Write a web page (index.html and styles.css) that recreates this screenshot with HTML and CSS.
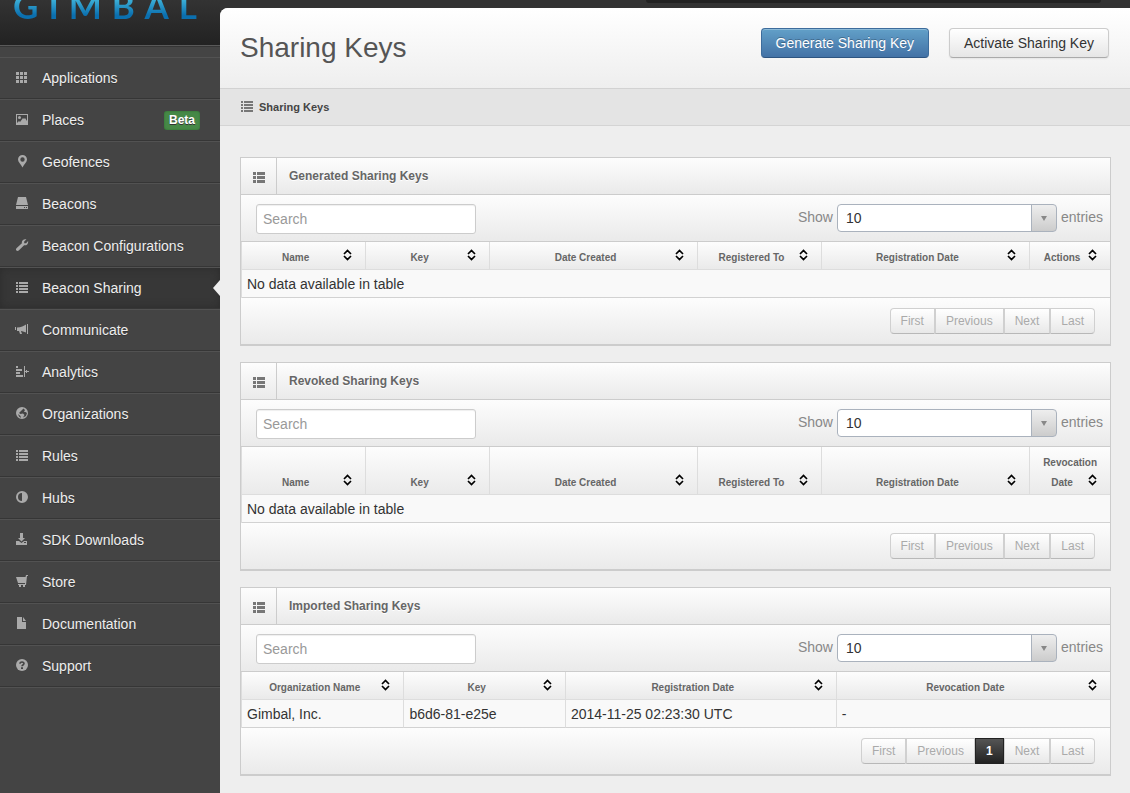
FILE: index.html
```html
<!DOCTYPE html>
<html lang="en">
<head>
<meta charset="utf-8">
<title>Sharing Keys</title>
<link rel="stylesheet" href="styles.css">
</head>
<body>
<svg class="sprite" aria-hidden="true">
  <symbol id="i-apps" viewBox="0 0 14 14"><path d="M1 1h3v3H1zM5 1h3v3H5zM9 1h3v3H9zM1 5h3v3H1zM5 5h3v3H5zM9 5h3v3H9zM1 9h3v3H1zM5 9h3v3H5zM9 9h3v3H9z"/></symbol>
  <symbol id="i-picture" viewBox="0 0 14 14"><path fill-rule="evenodd" d="M1 1h12v11H1zM2 2v8l2-2 1 1 3-4 1 1 1-1 2 3V2z"/><circle cx="4.5" cy="4.5" r="1.5"/></symbol>
  <symbol id="i-pin" viewBox="0 0 14 14"><path fill-rule="evenodd" d="M7.500 0a4.500 4.500 0 0 1 4.500 4.500C12 7 9 9.500 7.500 12.500 6 9.500 3 7 3 4.500A4.500 4.500 0 0 1 7.500 0zm0 2.300a2.200 2.200 0 1 0 0 4.400 2.200 2.200 0 0 0 0-4.400z"/></symbol>
  <symbol id="i-drive" viewBox="0 0 14 14"><path fill-rule="evenodd" d="M3 0h8l2 8H1zM1 9h12v3H1zM9 10v1h1v-1zM11 10v1h1v-1z"/></symbol>
  <symbol id="i-wrench" viewBox="0 0 14 14"><path d="M11.500.3 9.200 2.500v1.800h1.900l2-2.200c.5 2.600-1.500 4.600-4 4.100L4 11.300c-.8.900-2 .9-2.600.3-.7-.7-.6-1.800.3-2.600l5.200-4.700C6.300 1.700 8.500-.5 11.500.3z"/></symbol>
  <symbol id="i-list" viewBox="0 0 14 14"><path d="M1 1h2v2H1zM4 1h9v2H4zM1 4h2v2H1zM4 4h9v2H4zM1 7h2v2H1zM4 7h9v2H4zM1 10h2v2H1zM4 10h9v2H4z"/></symbol>
  <symbol id="i-horn" viewBox="0 0 14 14"><path d="M0 4h1v3H0zM12 1h1v10h-1zM11 1.500v8L6.500 8H6l1 3H5L4 8H2V4.500C6 4.500 9 3 11 1.500z"/></symbol>
  <symbol id="i-align" viewBox="0 0 14 14"><path d="M1 1h2v2H1zM1 4h6v2H1zM1 7h4v2H1zM1 10h7v2H1zM9 1h1v11H9zM11 5h1v1h2v1h-2v1h-1V7h-1V6h1z"/></symbol>
  <symbol id="i-globe" viewBox="0 0 14 14"><path fill-rule="evenodd" d="M7 0a6 6 0 1 1 0 12A6 6 0 0 1 7 0zM8.500 1.500 7 3 5.500 4.500 4 6l1.500 1L8 6.500 9.500 8 8 10.500l3-1.500 1-3-1.500-1L9 5l1-2zM3 7l1 2.500L6 11 5.500 9z"/></symbol>
  <symbol id="i-contrast" viewBox="0 0 14 14"><path fill-rule="evenodd" d="M7 0a6 6 0 1 1 0 12A6 6 0 0 1 7 0zm0 2a4 4 0 0 0 0 8z"/></symbol>
  <symbol id="i-download" viewBox="0 0 14 14"><path fill-rule="evenodd" d="M5 0h3v5h2L6.500 8.500 3 5h2zM1 8h3l2.500 2L9 8h3v4H1zM9 9v1h2V9z"/></symbol>
  <symbol id="i-cart" viewBox="0 0 14 14"><path d="M11 0h2v1h-1l-1 9H3V9h7V8H3L1 2h9.500zM4 10h2v2H4zM8 10h2v2H8z"/></symbol>
  <symbol id="i-file" viewBox="0 0 14 14"><path d="M2 0h5v5h4v7H2zM8 0l3 4H8z"/></symbol>
  <symbol id="i-help" viewBox="0 0 14 14"><circle cx="7" cy="6" r="6"/><path fill="none" stroke="#444" stroke-width="1.600" d="M5 4.700C5 2.300 9 2.500 9 4.600 9 6 7 6 7 7.300"/><path fill="#444" d="M6 8.300h2V10H6z"/></symbol>
  <symbol id="i-thlist" viewBox="0 0 14 14"><path d="M1 1h3v3H1zM5 1h8v3H5zM1 5h3v3H1zM5 5h8v3H5zM1 9h3v3H1zM5 9h8v3H5z"/></symbol>
  <symbol id="i-sort" viewBox="0 0 9 12"><path fill="none" stroke="#000" stroke-width="1.700" d="M1 5l3.500-3.500L8 5M1 7l3.500 3.500L8 7"/></symbol>
</svg>
<div class="app">
  <aside class="sidebar">
    <div class="brand"><span class="logo">GIMBAL</span></div>
    <nav class="nav">
      <a href="#"><svg class="icon"><use href="#i-apps"/></svg>Applications</a>
      <a href="#"><svg class="icon"><use href="#i-picture"/></svg>Places<span class="badge">Beta</span></a>
      <a href="#"><svg class="icon"><use href="#i-pin"/></svg>Geofences</a>
      <a href="#"><svg class="icon"><use href="#i-drive"/></svg>Beacons</a>
      <a href="#"><svg class="icon"><use href="#i-wrench"/></svg>Beacon Configurations</a>
      <a href="#" class="active" aria-current="page"><svg class="icon"><use href="#i-list"/></svg>Beacon Sharing</a>
      <a href="#"><svg class="icon"><use href="#i-horn"/></svg>Communicate</a>
      <a href="#"><svg class="icon"><use href="#i-align"/></svg>Analytics</a>
      <a href="#"><svg class="icon"><use href="#i-globe"/></svg>Organizations</a>
      <a href="#"><svg class="icon"><use href="#i-list"/></svg>Rules</a>
      <a href="#"><svg class="icon"><use href="#i-contrast"/></svg>Hubs</a>
      <a href="#"><svg class="icon"><use href="#i-download"/></svg>SDK Downloads</a>
      <a href="#"><svg class="icon"><use href="#i-cart"/></svg>Store</a>
      <a href="#"><svg class="icon"><use href="#i-file"/></svg>Documentation</a>
      <a href="#"><svg class="icon"><use href="#i-help"/></svg>Support</a>
    </nav>
  </aside>
  <div class="main">
    <div class="topbar"><div class="topmenu"></div></div>
    <main class="content">
      <header class="page-head">
        <h1>Sharing Keys</h1>
        <div class="actions">
          <button type="button" class="btn btn-primary">Generate Sharing Key</button>
          <button type="button" class="btn">Activate Sharing Key</button>
        </div>
      </header>
      <div class="breadcrumb"><svg class="icon"><use href="#i-list"/></svg><a href="#">Sharing Keys</a></div>
      <div class="panels">

        <section class="panel">
          <div class="panel-head"><span class="panel-icon"><svg class="icon"><use href="#i-thlist"/></svg></span><h2>Generated Sharing Keys</h2></div>
          <div class="toolbar">
            <input type="text" class="search" placeholder="Search" aria-label="Search generated sharing keys">
            <label class="length">Show <span class="select"><select><option>10</option><option>25</option><option>50</option></select></span> entries</label>
          </div>
          <table class="grid">
            <colgroup><col class="c-m"><col class="c-m"><col class="c-l"><col class="c-m"><col class="c-l"><col class="c-s"></colgroup>
            <thead><tr>
              <th><span class="sort">Name<svg><use href="#i-sort"/></svg></span></th>
              <th><span class="sort">Key<svg><use href="#i-sort"/></svg></span></th>
              <th><span class="sort">Date Created<svg><use href="#i-sort"/></svg></span></th>
              <th><span class="sort">Registered To<svg><use href="#i-sort"/></svg></span></th>
              <th><span class="sort">Registration Date<svg><use href="#i-sort"/></svg></span></th>
              <th><span class="sort">Actions<svg><use href="#i-sort"/></svg></span></th>
            </tr></thead>
            <tbody><tr><td colspan="6">No data available in table</td></tr></tbody>
          </table>
          <div class="panel-foot"><div class="pager">
            <button type="button">First</button><button type="button">Previous</button><button type="button">Next</button><button type="button">Last</button>
          </div></div>
        </section>

        <section class="panel">
          <div class="panel-head"><span class="panel-icon"><svg class="icon"><use href="#i-thlist"/></svg></span><h2>Revoked Sharing Keys</h2></div>
          <div class="toolbar">
            <input type="text" class="search" placeholder="Search" aria-label="Search revoked sharing keys">
            <label class="length">Show <span class="select"><select><option>10</option><option>25</option><option>50</option></select></span> entries</label>
          </div>
          <table class="grid">
            <colgroup><col class="c-m"><col class="c-m"><col class="c-l"><col class="c-m"><col class="c-l"><col class="c-s"></colgroup>
            <thead><tr>
              <th><span class="sort">Name<svg><use href="#i-sort"/></svg></span></th>
              <th><span class="sort">Key<svg><use href="#i-sort"/></svg></span></th>
              <th><span class="sort">Date Created<svg><use href="#i-sort"/></svg></span></th>
              <th><span class="sort">Registered To<svg><use href="#i-sort"/></svg></span></th>
              <th><span class="sort">Registration Date<svg><use href="#i-sort"/></svg></span></th>
              <th>Revocation <span class="sort">Date<svg><use href="#i-sort"/></svg></span></th>
            </tr></thead>
            <tbody><tr><td colspan="6">No data available in table</td></tr></tbody>
          </table>
          <div class="panel-foot"><div class="pager">
            <button type="button">First</button><button type="button">Previous</button><button type="button">Next</button><button type="button">Last</button>
          </div></div>
        </section>

        <section class="panel">
          <div class="panel-head"><span class="panel-icon"><svg class="icon"><use href="#i-thlist"/></svg></span><h2>Imported Sharing Keys</h2></div>
          <div class="toolbar">
            <input type="text" class="search" placeholder="Search" aria-label="Search imported sharing keys">
            <label class="length">Show <span class="select"><select><option>10</option><option>25</option><option>50</option></select></span> entries</label>
          </div>
          <table class="grid">
            <colgroup><col class="i-m"><col class="i-m"><col class="i-l"><col class="i-r"></colgroup>
            <thead><tr>
              <th><span class="sort">Organization Name<svg><use href="#i-sort"/></svg></span></th>
              <th><span class="sort">Key<svg><use href="#i-sort"/></svg></span></th>
              <th><span class="sort">Registration Date<svg><use href="#i-sort"/></svg></span></th>
              <th><span class="sort">Revocation Date<svg><use href="#i-sort"/></svg></span></th>
            </tr></thead>
            <tbody><tr><td>Gimbal, Inc.</td><td>b6d6-81-e25e</td><td>2014-11-25 02:23:30 UTC</td><td>-</td></tr></tbody>
          </table>
          <div class="panel-foot"><div class="pager">
            <button type="button">First</button><button type="button">Previous</button><button type="button" class="current">1</button><button type="button">Next</button><button type="button">Last</button>
          </div></div>
        </section>

      </div>
    </main>
  </div>
</div>
</body>
</html>
```
FILE: styles.css
```css
* { box-sizing: border-box; }

body {
  margin: 0;
  background: #333;
  color: #333;
  font: 14px/20px "Liberation Sans", Arial, sans-serif;
}

a { color: inherit; text-decoration: none; }
.sprite { display: none; }
.icon { width: 14px; height: 14px; flex: none; fill: currentColor; }

.app { display: flex; min-height: 100vh; }

/* Sidebar */
.sidebar { width: 220px; flex: none; background: #444; }

.brand {
  display: flex;
  align-items: flex-end;
  height: 46px;
  padding: 0 0 23px 13px;
  background: linear-gradient(#333, #222);
  border-bottom: 1px solid #595959;
  overflow: hidden;
}

.logo {
  color: transparent;
  background: linear-gradient(#4cc4e4 20%, #0b6fae 80%);
  background-clip: text;
  -webkit-background-clip: text;
  font: bold 35px/34px Lato, sans-serif;
  letter-spacing: 10px;
}

.nav {
  padding-top: 10px;
  border-top: 1px solid #353535;
  border-bottom: 1px solid #525252;
}

.nav a {
  position: relative;
  display: flex;
  align-items: center;
  height: 42px;
  padding: 0 20px 0 15px;
  border-top: 1px solid #525252;
  border-bottom: 1px solid #363636;
  color: #eee;
  text-shadow: 0 1px 0 #333;
}

.nav .icon { margin-right: 13px; color: #aaa; }

.nav .active {
  background: #373737;
  box-shadow: inset 0 0 8px #2c2c2c;
}

.nav .active::after {
  content: "";
  position: absolute;
  right: 0;
  top: 12px;
  border: 8px solid transparent;
  border-left-width: 0;
  border-right: 7px solid #eee;
}

.badge {
  margin-left: auto;
  padding: 0 5px;
  border-radius: 3px;
  background: #468847;
  box-shadow: inset 0 0 2px #2c6a2d;
  color: #fff;
  font-size: 12px;
  font-weight: bold;
  line-height: 19px;
}

/* Main column */
.main { flex: 1; min-width: 0; display: flex; flex-direction: column; }
.topbar { height: 8px; padding: 0 29px 0 426px; background: #333; }
.topmenu { height: 3px; background: #222; border-radius: 0 0 3px 3px; }
.content { flex: 1; background: #eee; border-top-left-radius: 8px; }

.page-head {
  display: flex;
  align-items: center;
  justify-content: space-between;
  padding: 20px 21px 30px 20px;
  border-bottom: 1px solid #d2d2d2;
  border-top-left-radius: 8px;
  background: linear-gradient(#fff, #eee);
}

.page-head h1 {
  margin: 0;
  padding-top: 10px;
  color: #555;
  font-size: 28px;
  font-weight: normal;
  line-height: 20px;
}

.actions { display: flex; gap: 20px; }

.btn {
  height: 30px;
  padding: 0 14px;
  border: 1px solid #ccc;
  border-bottom-color: #aaa;
  border-radius: 4px;
  background: linear-gradient(#fff, #e6e6e6);
  box-shadow: inset 0 1px 0 #fff, 0 1px 2px #0001;
  color: #333;
  font: inherit;
}

.btn-primary {
  border-color: #3d6c9c #3d6c9c #2d5480;
  background: linear-gradient(#62a0c8, #4372a6);
  box-shadow: inset 0 1px 0 #8cbad8;
  color: #fff;
  text-shadow: 0 -1px 0 #0004;
}

.breadcrumb {
  display: flex;
  align-items: center;
  gap: 5px;
  height: 37px;
  padding: 0 20px;
  border-bottom: 1px solid #d4d4d4;
  background: #e4e4e4;
  color: #444;
  font-size: 11px;
  font-weight: bold;
}

.breadcrumb .icon { color: #777; }

.panels {
  display: flex;
  flex-direction: column;
  gap: 16px;
  padding: 31px 19px 17px 20px;
}

/* Panels */
.panel { border: 1px solid #ccc; border-bottom-width: 2px; }

.panel-head,
.toolbar {
  display: flex;
  border-bottom: 1px solid #ccc;
  background: linear-gradient(#fdfdfd, #eaeaea);
}

.panel-head { height: 37px; }

.panel-icon {
  display: flex;
  align-items: center;
  width: 36px;
  padding: 3px 0 0 11px;
  border-right: 1px solid #ccc;
  color: #777;
}

.panel-head h2 {
  margin: 0;
  padding: 8px 12px;
  color: #666;
  font-size: 12px;
  font-weight: bold;
  line-height: 20px;
  text-shadow: 0 1px 0 #fff;
}

.toolbar {
  align-items: flex-start;
  justify-content: space-between;
  height: 47px;
  padding: 9px 7px 0 15px;
}

.search {
  width: 220px;
  height: 30px;
  padding: 0 6px;
  border: 1px solid #ccc;
  border-radius: 3px;
  background: #fff;
  box-shadow: inset 0 1px 1px #0001;
  color: #555;
  font: inherit;
}

.search::placeholder { color: #999; opacity: 1; }

.length { display: flex; gap: 4px; color: #888; line-height: 26px; }
.select { position: relative; }

.select select {
  display: block;
  width: 220px;
  height: 28px;
  padding: 0 30px 2px 8px;
  border: 1px solid #aab2bd;
  border-radius: 4px;
  appearance: none;
  background:
    linear-gradient(#aab2bd, #aab2bd) right 24px top / 1px 100% no-repeat,
    linear-gradient(#eee, #ccc) right / 24px 100% no-repeat,
    #fff;
  color: #333;
  font: inherit;
}

.select::after {
  content: "";
  position: absolute;
  right: 10px;
  top: 12px;
  border: 3px solid transparent;
  border-top: 5px solid #888;
  border-bottom: 0;
  pointer-events: none;
}

/* Tables */
.grid {
  width: 100%;
  table-layout: fixed;
  border-collapse: separate;
  border-spacing: 0;
  border-left: 1px solid #ddd;
  background: #f9f9f9;
}

.c-s { width: 9.3%; }
.c-m { width: 14.2%; }
.c-l { width: 24%; }
.i-m { width: 18.6%; }
.i-l { width: 31.2%; }
.i-r { width: 31.6%; }

.grid th {
  padding: 6px 10px 1px;
  border-bottom: 1px solid #ddd;
  background: linear-gradient(#fdfdfd, #eaeaea);
  color: #666;
  font-size: 10px;
  vertical-align: bottom;
  white-space: nowrap;
}

.grid td {
  padding: 4px 5px 3px;
  border-bottom: 1px solid #d2d2d2;
}

.grid th + th,
.grid td + td { border-left: 1px solid #ddd; }

.sort {
  display: flex;
  align-items: flex-start;
  justify-content: center;
  position: relative;
  padding-right: 16px;
}

.sort svg {
  position: absolute;
  right: 3px;
  top: 1px;
  width: 9px;
  height: 12px;
}

.panel-foot {
  display: flex;
  justify-content: flex-end;
  padding: 10px 15px;
  background: linear-gradient(#fdfdfd, #eaeaea);
}

.pager { display: flex; }

.pager button {
  height: 26px;
  padding: 0 10px;
  border: 1px solid #d0d0d0;
  border-bottom-color: #b8b8b8;
  background: linear-gradient(#fff, #e8e8e8);
  color: #aaa;
  font: 12px/20px "Liberation Sans", Arial, sans-serif;
}

.pager button:first-child { border-radius: 4px 0 0 4px; }
.pager button:last-child { border-radius: 0 4px 4px 0; }

.pager .current {
  border-color: #222;
  background: linear-gradient(#555, #222);
  color: #fff;
  font-weight: bold;
}
```
